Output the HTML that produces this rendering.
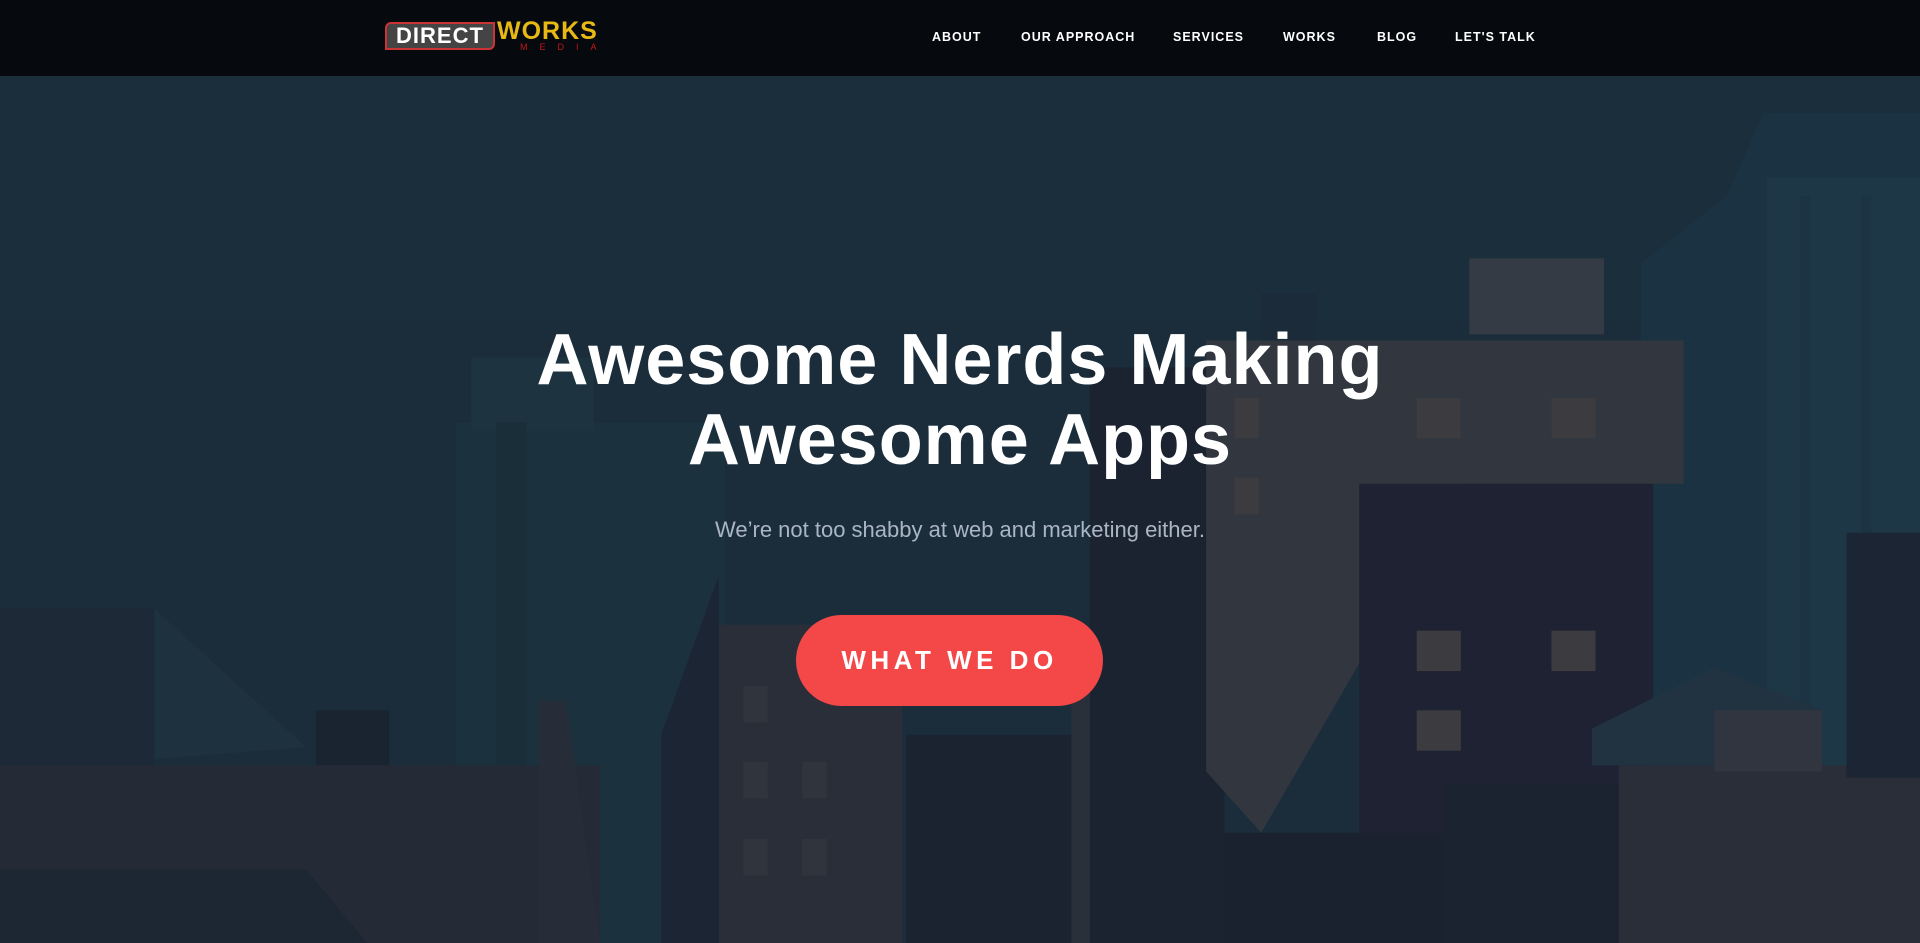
<!DOCTYPE html>
<html><head><meta charset="utf-8"><style>
html,body{margin:0;padding:0;width:1920px;height:943px;overflow:hidden;background:#1b2d3b;font-family:"Liberation Sans",sans-serif}
svg.bg{position:absolute;left:0;top:0;width:1920px;height:943px}
.nav{position:absolute;left:0;top:0;width:1920px;height:76px;background:#060a0e}
.logo{position:absolute;left:385px;top:22px;height:28px;width:220px}
.d{position:absolute;left:0;top:0;width:110px;height:28px;border:2px solid #c33;border-radius:6px 0 6px 0;box-sizing:border-box;background:#444;color:#fff;font:bold 22px/24px "Liberation Sans",sans-serif;text-align:center;letter-spacing:1px}
.w{position:absolute;left:112px;top:-4px;color:#e8b915;font:bold 25px/26px "Liberation Sans",sans-serif;letter-spacing:1px}
.m{position:absolute;left:135px;top:20px;color:#c31616;font:9px/10px "Liberation Sans",sans-serif;letter-spacing:12px}
.menu{position:absolute;top:29px;left:0;font:bold 12.5px/16px "Liberation Sans",sans-serif;color:#fff;letter-spacing:1px}
.menu span{position:absolute;white-space:nowrap}
h1{position:absolute;left:0;width:1920px;top:320px;margin:0;text-align:center;color:#fff;font:bold 72px/80px "Liberation Sans",sans-serif;letter-spacing:1px}
p.sub{position:absolute;left:0;width:1920px;top:516px;margin:0;text-align:center;color:#aab6c2;font:22px/28px "Liberation Sans",sans-serif}
.btn{position:absolute;left:796px;top:615px;width:307px;height:91px;border-radius:46px;background:#f44848;color:#fff;text-align:center;font:bold 26px/91px "Liberation Sans",sans-serif;letter-spacing:4.5px}
</style></head><body>
<svg class="bg" viewBox="0 0 1568 770" preserveAspectRatio="none">
<rect width="1568" height="770" fill="#1b2d3b"/>
<rect x="0" y="62" width="1568" height="200" fill="#1a2e3c"/>
<polygon points="1340,215 1410,160 1440,92 1568,92 1568,630 1340,630" fill="#1a3242"/>
<rect x="1443" y="145" width="125" height="500" fill="#1d3747"/>
<rect x="1470" y="160" width="8" height="460" fill="#1b3342"/>
<rect x="1520" y="160" width="8" height="460" fill="#1b3342"/>
<rect x="372" y="345" width="220" height="425" fill="#1c313e"/>
<rect x="385" y="292" width="100" height="60" fill="#1d3440"/>
<rect x="405" y="345" width="25" height="425" fill="#1a2e3a"/>
<rect x="890" y="300" width="110" height="470" fill="#1b2331"/>
<rect x="1030" y="240" width="45" height="100" fill="#1c2b39"/>
<polygon points="985,278 1375,278 1375,395 1195,395 1030,680 985,630" fill="#31363f"/>
<rect x="1200" y="211" width="110" height="62" fill="#353b44"/>
<rect x="1110" y="395" width="240" height="300" fill="#1f2233"/>
<g fill="#3b3b40"><rect x="1008" y="325" width="20" height="33"/><rect x="1157" y="325" width="36" height="33"/><rect x="1267" y="325" width="36" height="33"/><rect x="1008" y="390" width="20" height="30"/><rect x="1157" y="515" width="36" height="33"/><rect x="1267" y="515" width="36" height="33"/><rect x="1157" y="580" width="36" height="33"/></g>
<rect x="0" y="497" width="126" height="140" fill="#1d2936"/>
<polygon points="126,497 250,610 126,620" fill="#1d313e"/>
<rect x="258" y="580" width="60" height="60" fill="#1a2430"/>
<rect x="0" y="625" width="490" height="145" fill="#242b36"/>
<polygon points="440,572 462,572 490,770 440,770" fill="#262d38"/>
<polygon points="0,710 250,710 300,770 0,770" fill="#1d2633"/>
<rect x="587" y="510" width="150" height="260" fill="#292e39"/>
<polygon points="540,600 587,470 587,770 540,770" fill="#1c2533"/>
<rect x="740" y="600" width="135" height="170" fill="#1b2331"/>
<rect x="875" y="530" width="15" height="240" fill="#2a303a"/>
<g fill="#30343c"><rect x="607" y="560" width="20" height="30"/><rect x="607" y="622" width="20" height="30"/><rect x="655" y="622" width="20" height="30"/><rect x="607" y="685" width="20" height="30"/><rect x="655" y="685" width="20" height="30"/></g>
<rect x="1180" y="640" width="150" height="130" fill="#1b2230"/>
<rect x="1322" y="625" width="246" height="145" fill="#292e38"/>
<polygon points="1300,595 1400,545 1488,580 1488,625 1300,625" fill="#213341"/>
<rect x="1400" y="580" width="88" height="50" fill="#31353f"/>
<rect x="1508" y="435" width="60" height="200" fill="#1b2533"/>
<rect x="1000" y="680" width="180" height="90" fill="#1a2230"/>
</svg>
<div class="nav">
 <div class="logo"><div class="d">DIRECT</div><div class="w">WORKS</div><div class="m">MEDIA</div></div>
 <div class="menu">
  <span style="left:932px">ABOUT</span>
  <span style="left:1021px">OUR APPROACH</span>
  <span style="left:1173px">SERVICES</span>
  <span style="left:1283px">WORKS</span>
  <span style="left:1377px">BLOG</span>
  <span style="left:1455px">LET'S TALK</span>
 </div>
</div>
<h1>Awesome Nerds Making<br>Awesome Apps</h1>
<p class="sub">We’re not too shabby at web and marketing either.</p>
<div class="btn">WHAT WE DO</div>
</body></html>
